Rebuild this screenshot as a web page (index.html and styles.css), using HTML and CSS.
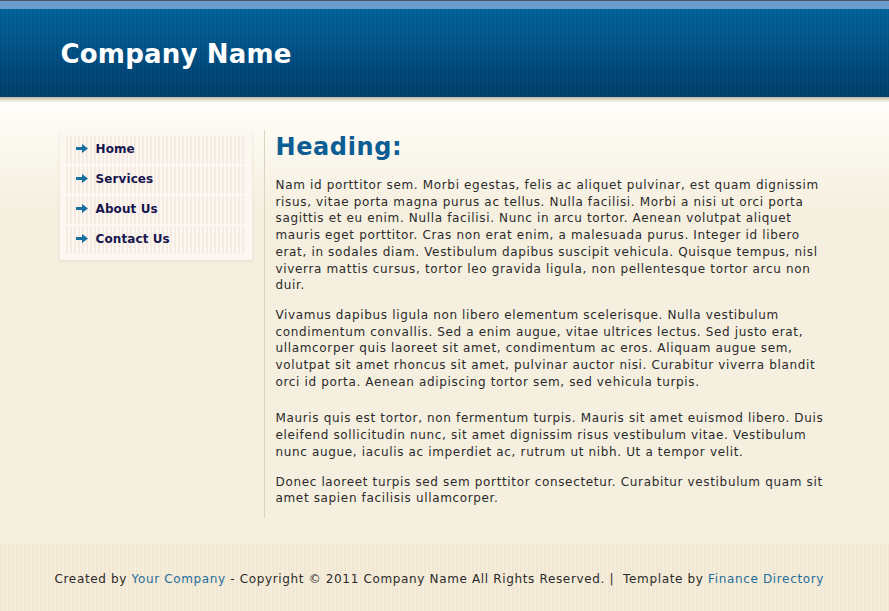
FILE: index.html
```html
<!DOCTYPE html>
<html>
<head>
<meta charset="utf-8">
<title>Company Name</title>
<link rel="stylesheet" href="styles.css">
</head>
<body>
<div class="topline"></div>
<header class="header">
  <div class="wrap">
    <h1 class="logo">Company Name</h1>
  </div>
</header>
<div class="shadow"></div>
<div class="main">
  <div class="wrap cols">
    <nav class="side">
      <ul class="menu">
        <li><a href="#"><svg class="arr" width="12" height="9" viewBox="0 0 12 9"><path d="M0 3h6V0l6 4.5L6 9V6H0z" fill="#16709f"/></svg>Home</a></li>
        <li><a href="#"><svg class="arr" width="12" height="9" viewBox="0 0 12 9"><path d="M0 3h6V0l6 4.5L6 9V6H0z" fill="#16709f"/></svg>Services</a></li>
        <li><a href="#"><svg class="arr" width="12" height="9" viewBox="0 0 12 9"><path d="M0 3h6V0l6 4.5L6 9V6H0z" fill="#16709f"/></svg>About Us</a></li>
        <li><a href="#"><svg class="arr" width="12" height="9" viewBox="0 0 12 9"><path d="M0 3h6V0l6 4.5L6 9V6H0z" fill="#16709f"/></svg>Contact Us</a></li>
      </ul>
    </nav>
    <main class="content">
      <h2 class="heading">Heading:</h2>
      <p>Nam id porttitor sem. Morbi egestas, felis ac aliquet pulvinar, est quam dignissim risus, vitae porta magna purus ac tellus. Nulla facilisi. Morbi a nisi ut orci porta sagittis et eu enim. Nulla facilisi. Nunc in arcu tortor. Aenean volutpat aliquet mauris eget porttitor. Cras non erat enim, a malesuada purus. Integer id libero erat, in sodales diam. Vestibulum dapibus suscipit vehicula. Quisque tempus, nisl viverra mattis cursus, tortor leo gravida ligula, non pellentesque tortor arcu non duir.</p>
      <p>Vivamus dapibus ligula non libero elementum scelerisque. Nulla vestibulum condimentum convallis. Sed a enim augue, vitae ultrices lectus. Sed justo erat, ullamcorper quis laoreet sit amet, condimentum ac eros. Aliquam augue sem, volutpat sit amet rhoncus sit amet, pulvinar auctor nisi. Curabitur viverra blandit orci id porta. Aenean adipiscing tortor sem, sed vehicula turpis.</p>
      <p class="gap">Mauris quis est tortor, non fermentum turpis. Mauris sit amet euismod libero. Duis eleifend sollicitudin nunc, sit amet dignissim risus vestibulum vitae. Vestibulum nunc augue, iaculis ac imperdiet ac, rutrum ut nibh. Ut a tempor velit.</p>
      <p>Donec laoreet turpis sed sem porttitor consectetur. Curabitur vestibulum quam sit amet sapien facilisis ullamcorper.</p>
    </main>
  </div>
</div>
<footer class="footer">
  <div class="wrap">
    <p class="credits">Created by <a href="#">Your Company</a> - Copyright © 2011 Company Name All Rights Reserved. |&nbsp; Template by <a href="#">Finance Directory</a></p>
  </div>
</footer>
</body>
</html>
```

FILE: styles.css
```css
html, body {
  margin: 0;
  padding: 0;
}
body {
  background: #f5efdf;
  font-family: "DejaVu Sans", Verdana, sans-serif;
  font-size: 12px;
  color: #2b2b2b;
}
.wrap {
  width: 780px;
  margin: 0 auto;
}
.topline {
  height: 1px;
  background: #4a5866;
  border-bottom: 8px solid #6a9dcb;
}
.header {
  height: 88px;
  background:
    repeating-linear-gradient(90deg, rgba(0,0,0,0.07) 0 2px, rgba(255,255,255,0) 2px 4px),
    linear-gradient(#01659f 0%, #035b91 30%, #024c80 65%, #02426f 100%);
}
.logo {
  margin: 0;
  padding: 30px 0 0 6px;
  color: #ffffff;
  font-size: 26px;
  font-weight: bold;
  line-height: 30px;
  letter-spacing: 0.2px;
}
.shadow {
  height: 5px;
  background: linear-gradient(#c2b9a4, #e5dfd0 60%, #faf8f2);
}
.main {
  background: linear-gradient(#fffefa 0px, #fdfbf4 20px, #f5efdf 110px);
  padding: 28px 0 26px;
}
.cols {
  display: flex;
  align-items: flex-start;
}
.side {
  margin-left: 5px;
  width: 180px;
  padding: 6px;
  background: #fcf8f1;
  box-shadow: 0 1px 3px rgba(160, 140, 100, 0.2);
}
.menu {
  list-style: none;
  margin: 0;
  padding: 0;
  display: flex;
  flex-direction: column;
  gap: 2px;
}
.menu a {
  display: flex;
  align-items: center;
  height: 28px;
  padding-left: 10px;
  padding-bottom: 3px;
  box-sizing: border-box;
  background: repeating-linear-gradient(90deg, #f6ebe3 0 2px, #fcf6f1 2px 4px);
  color: #16164e;
  font-weight: bold;
  font-size: 12px;
  text-decoration: none;
  letter-spacing: 0.1px;
}
.arr {
  margin-right: 8px;
}
.content {
  margin-left: 12px;
  border-left: 1px solid #ddd4bf;
  padding: 0 0 11px 11px;
  width: 548px;
}
.heading {
  margin: 0;
  padding-top: 2px;
  color: #0c5d93;
  font-size: 24px;
  font-weight: bold;
  line-height: 30px;
  letter-spacing: 0.6px;
}
.content p {
  margin: 13px 0 0;
  line-height: 16.7px;
  letter-spacing: 0.65px;
}
.content p:first-of-type {
  margin-top: 15px;
}
.content p.gap {
  margin-top: 20px;
}
.footer {
  background: repeating-linear-gradient(90deg, #f1e7d2 0 2px, #f5eddc 2px 4px);
  height: 67px;
}
.credits {
  margin: 0;
  padding-top: 27px;
  line-height: 16px;
  color: #2b2b2b;
  letter-spacing: 0.65px;
}
.credits a {
  color: #1f6e9b;
  text-decoration: none;
}
```
